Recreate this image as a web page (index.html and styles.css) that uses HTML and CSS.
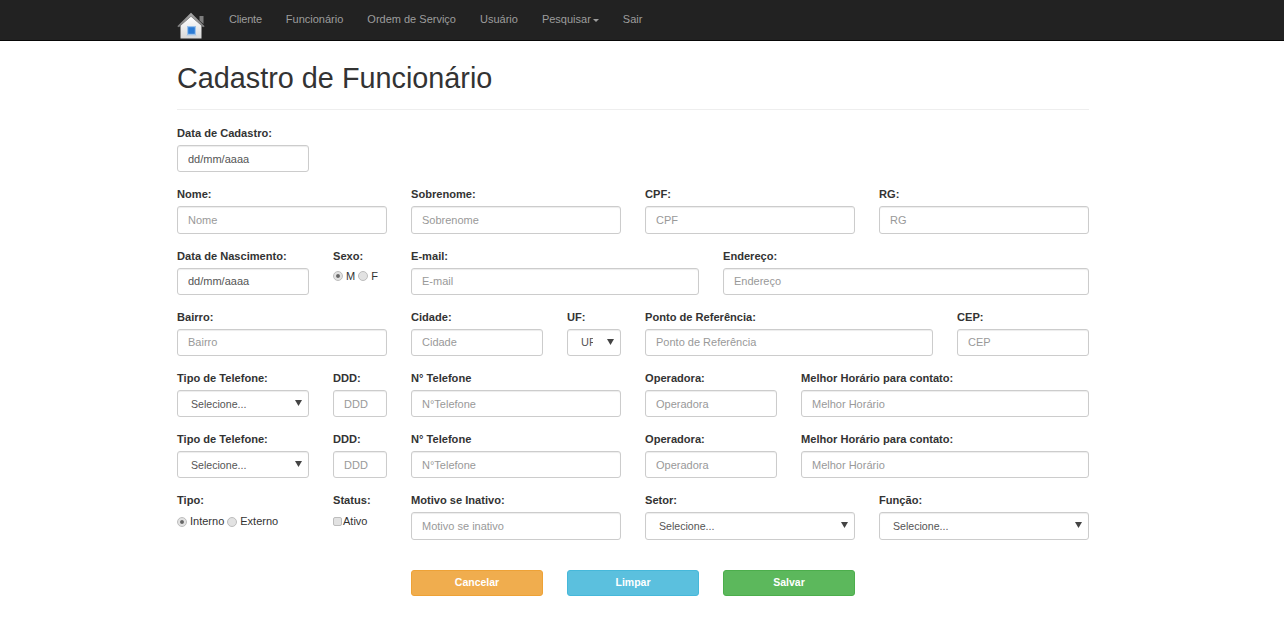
FILE: index.html
```html
<!DOCTYPE html>
<html lang="pt-BR">
<head>
<meta charset="utf-8">
<title>Cadastro de Funcionário</title>
<link rel="stylesheet" href="styles.css">
</head>
<body>
<nav class="navbar">
  <div class="nav-inner">
    <a class="brand" href="#" aria-label="Início">
      <svg width="28" height="27" viewBox="0 0 28 27">
        <defs>
          <linearGradient id="wall" x1="0" y1="0" x2="0" y2="1"><stop offset="0" stop-color="#ffffff"/><stop offset="1" stop-color="#d8d8d8"/></linearGradient>
          <linearGradient id="roof" x1="0" y1="0" x2="0" y2="1"><stop offset="0" stop-color="#a8a8a8"/><stop offset="1" stop-color="#7c7c7c"/></linearGradient>
        </defs>
        <path d="M22.5 4h4v8l-4-3.5z" fill="#7e7e7e"/>
        <path d="M3.5 13.5L14 4.5l10.5 9v13h-21z" fill="url(#wall)"/>
        <path d="M.3 14.2L14 .7l13.7 13.5-1.6 1L14 4.6 1.9 15.2z" fill="url(#roof)"/>
        <rect x="10" y="14" width="9" height="9" fill="#9cc2ea"/>
        <rect x="11.2" y="15.2" width="6.6" height="6.6" fill="#2b7bd4"/>
        <rect x="9.5" y="23" width="10" height="1.2" fill="#c6d2de"/>
      </svg>
    </a>
    <ul class="nav-list">
      <li class="nav-first"><a href="#">Cliente</a></li>
      <li><a href="#">Funcionário</a></li>
      <li><a href="#">Ordem de Serviço</a></li>
      <li><a href="#">Usuário</a></li>
      <li><a href="#">Pesquisar<span class="caret"></span></a></li>
      <li><a href="#">Sair</a></li>
    </ul>
  </div>
</nav>
<main class="page">
  <h1 class="title">Cadastro de Funcionário</h1>
  <hr class="divider">
  <form class="form">
    <div class="row">
      <div class="field s2"><label>Data de Cadastro:</label><input class="control date" type="text" value="dd/mm/aaaa"></div>
    </div>
    <div class="row">
      <div class="field s3"><label>Nome:</label><input class="control" type="text" placeholder="Nome"></div>
      <div class="field s3"><label>Sobrenome:</label><input class="control" type="text" placeholder="Sobrenome"></div>
      <div class="field s3"><label>CPF:</label><input class="control" type="text" placeholder="CPF"></div>
      <div class="field s3"><label>RG:</label><input class="control" type="text" placeholder="RG"></div>
    </div>
    <div class="row">
      <div class="field s2"><label>Data de Nascimento:</label><input class="control date" type="text" value="dd/mm/aaaa"></div>
      <div class="field s1"><label>Sexo:</label>
        <div class="choices tight"><input class="radio" type="radio" name="sexo" checked><span>M</span><input class="radio" type="radio" name="sexo"><span>F</span></div>
      </div>
      <div class="field s4"><label>E-mail:</label><input class="control" type="text" placeholder="E-mail"></div>
      <div class="field s4-5"><label>Endereço:</label><input class="control" type="text" placeholder="Endereço"></div>
    </div>
    <div class="row">
      <div class="field s3"><label>Bairro:</label><input class="control" type="text" placeholder="Bairro"></div>
      <div class="field s2"><label>Cidade:</label><input class="control" type="text" placeholder="Cidade"></div>
      <div class="field s1"><label>UF:</label><select class="control uf"><option>UF</option></select></div>
      <div class="field s4"><label>Ponto de Referência:</label><input class="control" type="text" placeholder="Ponto de Referência"></div>
      <div class="field s2"><label>CEP:</label><input class="control" type="text" placeholder="CEP"></div>
    </div>
    <div class="row">
      <div class="field s2"><label>Tipo de Telefone:</label><select class="control"><option>Selecione...</option></select></div>
      <div class="field s1"><label>DDD:</label><input class="control" type="text" placeholder="DDD"></div>
      <div class="field s3"><label>N° Telefone</label><input class="control" type="text" placeholder="N°Telefone"></div>
      <div class="field s2"><label>Operadora:</label><input class="control" type="text" placeholder="Operadora"></div>
      <div class="field s4"><label>Melhor Horário para contato:</label><input class="control" type="text" placeholder="Melhor Horário"></div>
    </div>
    <div class="row">
      <div class="field s2"><label>Tipo de Telefone:</label><select class="control"><option>Selecione...</option></select></div>
      <div class="field s1"><label>DDD:</label><input class="control" type="text" placeholder="DDD"></div>
      <div class="field s3"><label>N° Telefone</label><input class="control" type="text" placeholder="N°Telefone"></div>
      <div class="field s2"><label>Operadora:</label><input class="control" type="text" placeholder="Operadora"></div>
      <div class="field s4"><label>Melhor Horário para contato:</label><input class="control" type="text" placeholder="Melhor Horário"></div>
    </div>
    <div class="row">
      <div class="field s2"><label>Tipo:</label>
        <div class="choices"><input class="radio" type="radio" name="tipo" checked><span>Interno</span><input class="radio" type="radio" name="tipo"><span>Externo</span></div>
      </div>
      <div class="field s1"><label>Status:</label>
        <div class="choices"><input class="check" type="checkbox"><span>Ativo</span></div>
      </div>
      <div class="field s3"><label>Motivo se Inativo:</label><input class="control" type="text" placeholder="Motivo se inativo"></div>
      <div class="field s3"><label>Setor:</label><select class="control"><option>Selecione...</option></select></div>
      <div class="field s3"><label>Função:</label><select class="control"><option>Selecione...</option></select></div>
    </div>
    <div class="row actions">
      <button class="btn s2 start4 warning" type="button">Cancelar</button>
      <button class="btn s2 info" type="button">Limpar</button>
      <button class="btn s2 success" type="button">Salvar</button>
    </div>
  </form>
</main>
</body>
</html>
```
FILE: styles.css
```css
* { box-sizing: border-box; }
html, body { margin: 0; padding: 0; }
body {
  font-family: "Liberation Sans", Arial, sans-serif;
  font-size: 12px;
  line-height: 17px;
  color: #333;
  background: #fff;
}
.navbar {
  height: 41px;
  background: #222;
  border-bottom: 1px solid #080808;
}
.nav-inner {
  width: 912px;
  margin-left: 177px;
  display: flex;
  align-items: flex-start;
  height: 40px;
}
.brand { display: block; width: 28px; height: 27px; margin-top: 12px; }
.brand svg { display: block; }
.nav-list {
  display: flex;
  list-style: none;
  margin: 11px 0 0 12px;
  padding: 0;
}
.nav-list li { padding: 0 12px; }
.nav-list a { color: #9d9d9d; text-decoration: none; font-size: 11px; display: block; }
.nav-first a { letter-spacing: -.2px; }
.caret {
  display: inline-block;
  width: 0;
  height: 0;
  margin-left: 2px;
  vertical-align: middle;
  border-top: 3px solid #9d9d9d;
  border-left: 3px solid transparent;
  border-right: 3px solid transparent;
}
.page { width: 912px; margin-left: 177px; }
.title {
  margin: 19px 0 0;
  font-size: 28.8px;
  font-weight: 400;
  line-height: 36px;
  color: #333;
}
.divider { border: 0; border-top: 1px solid #eee; margin: 13px 0 0; }
.form { margin-top: 15.2px; }
.row {
  display: grid;
  grid-template-columns: repeat(12, 54px);
  column-gap: 24px;
  height: 61.2px;
}
.field { min-width: 0; }
.s1 { grid-column: span 1; }
.s2 { grid-column: span 2; }
.s3 { grid-column: span 3; }
.s4 { grid-column: span 4; }
.s4-5 { grid-column: span 4; width: 366px; }
.start4 { grid-column: 4 / span 2; }
label {
  display: block;
  font-size: 11.1px;
  font-weight: 700;
  line-height: 17px;
  margin-bottom: 3px;
  color: #333;
}
.control {
  display: block;
  width: 100%;
  height: 27.2px;
  padding: 0 10px;
  font-family: inherit;
  font-size: 11px;
  color: #555;
  background: #fff;
  border: 1px solid #ccc;
  border-radius: 3px;
  box-shadow: inset 0 1px 1px rgba(0, 0, 0, .075);
  outline: 0;
}
.control::placeholder { color: #999; opacity: 1; }
select.control {
  appearance: none;
  padding-left: 13px;
  font-size: 10.6px;
  background-image: url("data:image/svg+xml,%3Csvg xmlns='http://www.w3.org/2000/svg' width='7' height='6'%3E%3Cpath d='M0 0h7L3.5 6z' fill='%23444'/%3E%3C/svg%3E");
  background-size: 7px 6px;
  background-position: right 6px top 9px;
  background-repeat: no-repeat;
}
select.uf { padding-right: 27px; font-size: 11px; }
.choices { display: flex; align-items: center; font-size: 11px; margin-top: 4px; color: #333; }
.choices.tight { margin-top: 3px; }
.tight .radio { margin-top: -1px; }
.radio, .check {
  appearance: none;
  margin: 0;
  flex: none;
  width: 10px;
  height: 10px;
  background: #e2e2e2;
  border: 1px solid #bdbdbd;
}
.radio { border-radius: 50%; margin-right: 3px; }
.radio:checked { background: radial-gradient(circle, #666 0 1.4px, #e2e2e2 2.4px); }
.check { width: 9px; height: 9px; border-radius: 2px; margin-right: 1px; }
.choices span + .radio { margin-left: 3px; }
.actions { height: 26px; margin-top: 16.4px; }
.btn {
  height: 26px;
  font-family: inherit;
  font-size: 10.5px;
  font-weight: 700;
  color: #fff;
  border: 1px solid;
  border-radius: 3px;
  padding: 0 0 2px;
}
.warning { background: #f0ad4e; border-color: #eea236; }
.info { background: #5bc0de; border-color: #46b8da; }
.success { background: #5cb85c; border-color: #4cae4c; }
```
